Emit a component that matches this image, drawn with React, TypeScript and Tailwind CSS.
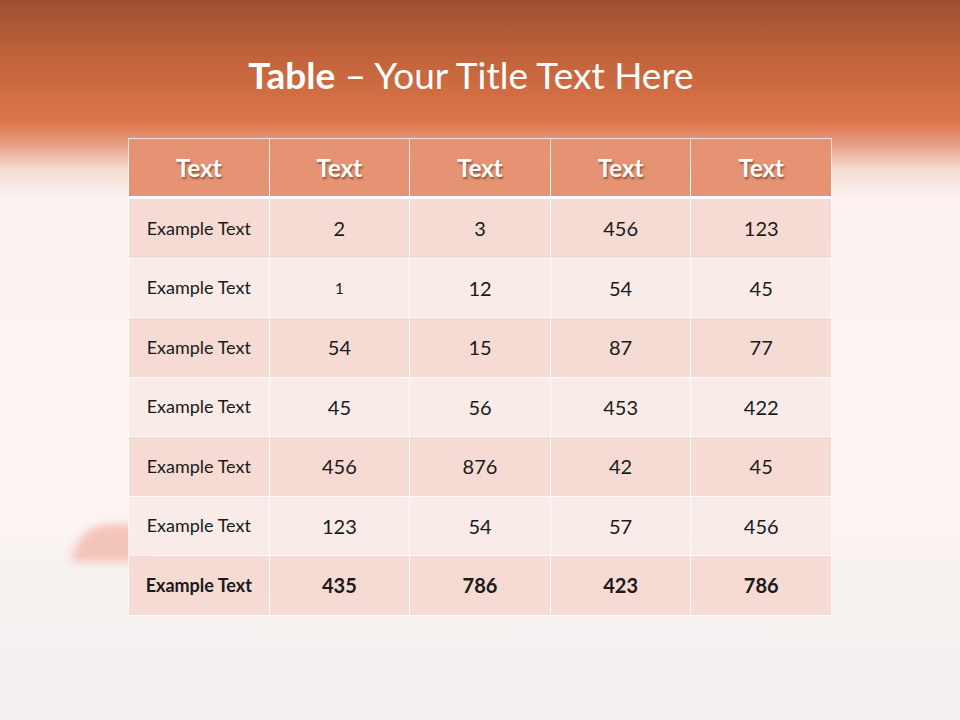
import React from 'react';

const rows: string[][] = [
  ['Example Text', '2', '3', '456', '123'],
  ['Example Text', '1', '12', '54', '45'],
  ['Example Text', '54', '15', '87', '77'],
  ['Example Text', '45', '56', '453', '422'],
  ['Example Text', '456', '876', '42', '45'],
  ['Example Text', '123', '54', '57', '456'],
  ['Example Text', '435', '786', '423', '786'],
];

function App() {
  return (
    <div
      className="relative w-[960px] h-[720px] overflow-hidden bg-[linear-gradient(180deg,#9e4f30_0px,#c2643c_60px,#dd7549_122px,#e6a088_145px,#f6dcd3_170px,#fbf2f0_198px,#fcf5f4_520px,#f7f1f0_570px,#f4efee_720px)]"
      style={{ fontFamily: 'Lato, "Open Sans", sans-serif' }}
    >
      {/* blurred decoration behind the table */}
      <div className="absolute left-[72px] top-[524px] w-[80px] h-[38px] rounded-tl-[45px] rounded-tr-[25px] bg-[#f0a595] blur-[4px] opacity-60"></div>

      <h1 className="h-[138px] pt-[56px] pr-[18px] text-center text-[37px] text-white leading-none">
        <span className="font-bold">Table</span> – Your Title Text Here
      </h1>

      <div className="relative mx-auto w-[704px] bg-white/70 p-px">
        <div className="grid grid-cols-5 gap-px mb-[3px]">
          {['Text', 'Text', 'Text', 'Text', 'Text'].map((h, i) => (
            <div
              key={i}
              className="h-[57px] flex items-center justify-center bg-[#e59372] text-white font-bold text-[24px] [text-shadow:1px_2px_2px_rgba(80,30,10,0.55)]"
            >
              {h}
            </div>
          ))}
        </div>
        <div className="grid grid-cols-5 gap-px">
          {rows.map((r, ri) =>
            r.map((c, ci) => {
              const last = ri === rows.length - 1;
              const dark = ri % 2 === 0;
              return (
                <div
                  key={ri + '-' + ci}
                  className={
                    'h-[58.5px] flex items-center justify-center text-[#1a1a1a] ' +
                    (dark ? 'bg-[#f5dbd3] ' : 'bg-[#f9ece8] ') +
                    (last ? 'font-bold ' : '') +
                    (ci === 0 ? 'text-[18px]' : ri === 1 && ci === 1 ? 'text-[15px]' : 'text-[20px]')
                  }
                >
                  {c}
                </div>
              );
            })
          )}
        </div>
      </div>
    </div>
  );
}

export default App;
